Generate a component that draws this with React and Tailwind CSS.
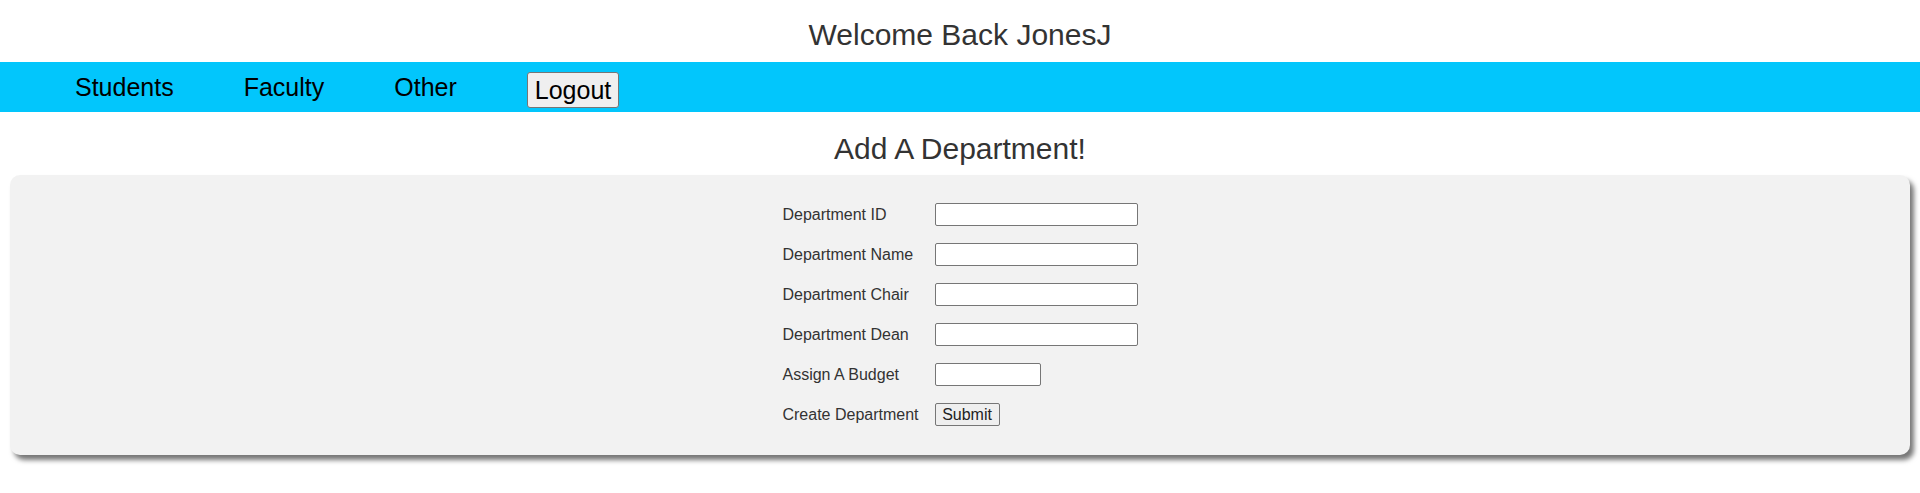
import React from "react";

const rows = [
  { label: "Department ID", name: "deptId", w: "w-[203px]" },
  { label: "Department Name", name: "deptName", w: "w-[203px]" },
  { label: "Department Chair", name: "deptChair", w: "w-[203px]" },
  { label: "Department Dean", name: "deptDean", w: "w-[203px]" },
  { label: "Assign A Budget", name: "budget", w: "w-[106px]" },
];

export default function App() {
  return (
    <div className="min-h-screen bg-white font-['Liberation_Sans',Arial,sans-serif]">
      {/* Header */}
      <div className="h-[62px] pt-[17px] text-center text-[30px] leading-[35px] text-[#333]">
        Welcome Back JonesJ
      </div>

      {/* Nav */}
      <nav className="flex h-[50px] items-start gap-[70px] bg-[#02c6fc] pl-[75px] pt-[10px] text-[25px] text-black">
        <a className="mt-[1px] cursor-pointer leading-[29px]">Students</a>
        <a className="mt-[1px] cursor-pointer leading-[29px]">Faculty</a>
        <a className="mt-[1px] cursor-pointer leading-[29px]">Other</a>
        <button className="rounded-[3px] border border-[#767676] bg-[#efefef] px-[7px] py-[3px] leading-[28px] text-black">
          Logout
        </button>
      </nav>

      {/* Title */}
      <h2 className="mb-[9px] pt-[19px] text-center text-[30px] leading-[35px] text-[#333]">
        Add A Department!
      </h2>

      {/* Form card */}
      <div className="mx-[10px] rounded-[10px] bg-[#f2f2f2] pb-[29px] pt-[28px] shadow-[4px_5px_5px_#777]">
        <form
          onSubmit={(e) => e.preventDefault()}
          className="mx-auto grid w-max grid-cols-[auto_auto] items-center gap-x-4 gap-y-[17px] text-[16px] text-[#333]"
        >
          {rows.map((r) => (
            <React.Fragment key={r.name}>
              <label htmlFor={r.name} className="leading-[23px]">
                {r.label}
              </label>
              <input
                id={r.name}
                name={r.name}
                type="text"
                className={`${r.w} h-[23px] rounded-[2px] border border-[#767676] bg-white px-1 text-[13px] outline-none`}
              />
            </React.Fragment>
          ))}
          <span className="leading-[23px]">Create Department</span>
          <div className="flex h-[23px]">
            <button
              type="submit"
              className="h-[23px] w-[65px] rounded-[2px] border border-[#767676] bg-[#efefef] text-[16px] leading-[19px] text-[#222]"
            >
              Submit
            </button>
          </div>
        </form>
      </div>
    </div>
  );
}
